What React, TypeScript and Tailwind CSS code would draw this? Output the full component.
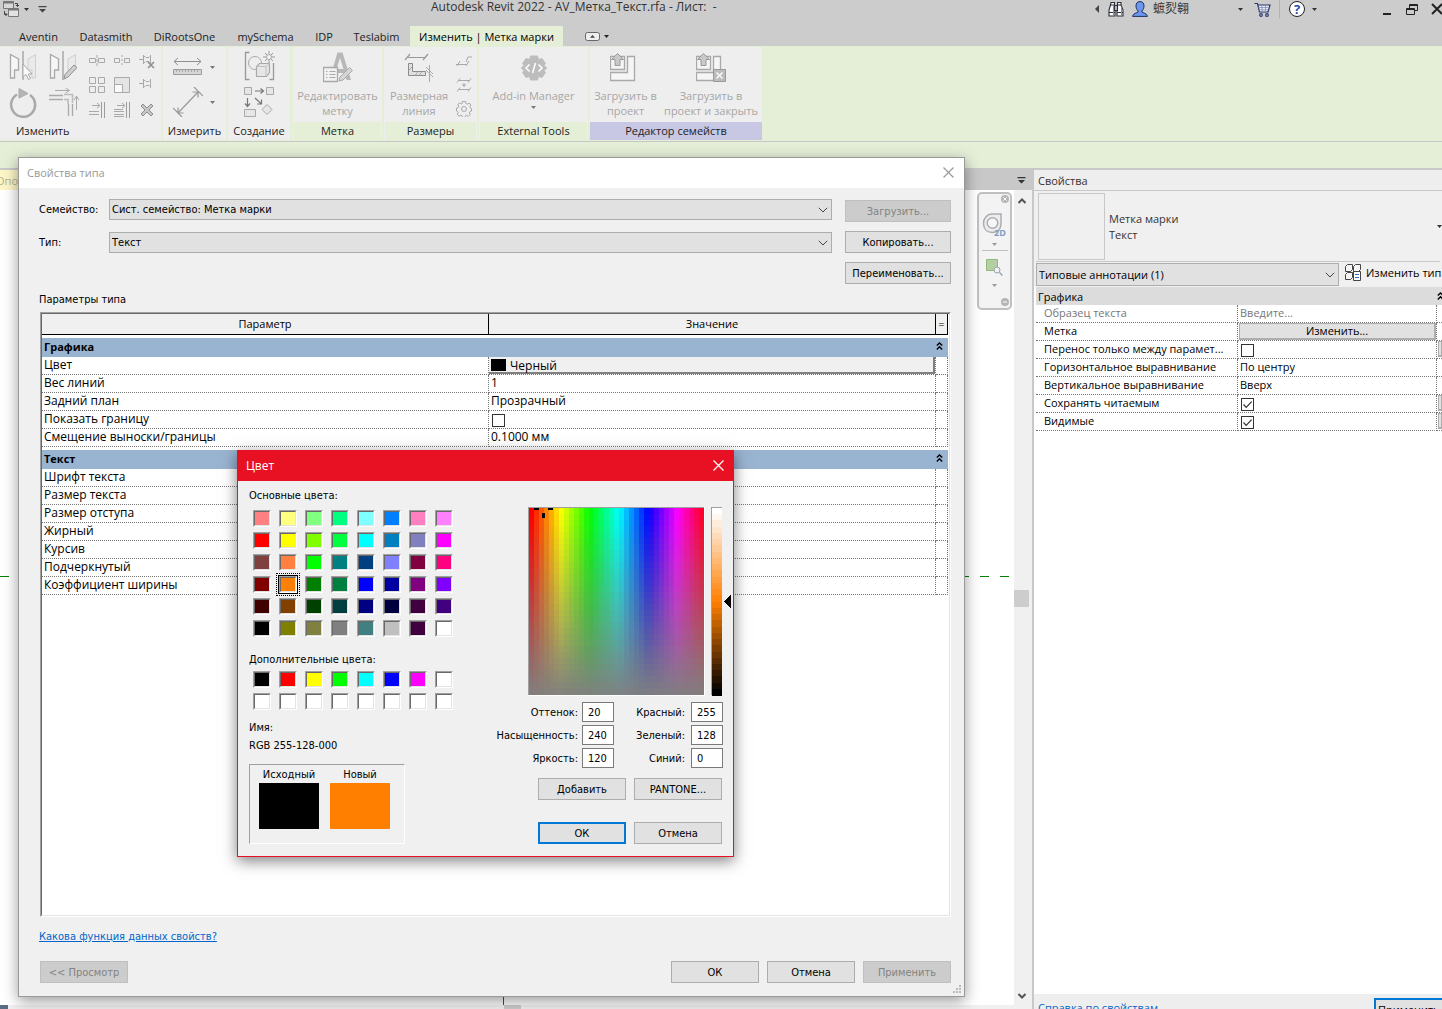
import React from 'react';
import clsx from 'clsx';

const dialogFont = "font-['DejaVu_Sans_Condensed','DejaVu_Sans',sans-serif] text-[11px]";

/* ---------- shared controls ---------- */

interface PushButtonProps {
  children: React.ReactNode;
  className?: string;
  disabled?: boolean;
  primary?: boolean;
}

const PushButton: React.FC<PushButtonProps> = ({ children, className, disabled, primary }) => (
  <button
    disabled={disabled}
    className={clsx(
      'h-[22px] shrink-0 whitespace-nowrap pt-0.5 text-center leading-4',
      primary ? 'border-2 border-[#0078d7]' : 'border',
      disabled ? 'border-[#bfbfbf] bg-[#cccccc] text-[#838383]' : 'bg-[#e1e1e1] text-black',
      !disabled && !primary && 'border-[#adadad]',
      className
    )}
  >
    {children}
  </button>
);

const Caret = ({ className }: { className?: string }) => (
  <svg width="5" height="3" viewBox="0 0 5 3" className={clsx('shrink-0', className)} fill="currentColor">
    <path d="M0 0h5L2.5 3z" />
  </svg>
);

const SelectBox = ({ id, label, value, className }: { id: string; label?: string; value: string; className?: string }) => (
  <div className={clsx('relative', className)}>
    <select
      id={id}
      aria-label={label}
      className="block h-full w-full appearance-none border border-[#adadad] bg-[#e1e1e1] pl-0.5 pt-px text-black"
    >
      <option>{value}</option>
    </select>
    <svg width="10" height="6" viewBox="0 0 10 6" className="pointer-events-none absolute right-1 top-1/2 -mt-[3px]" fill="none" stroke="#444">
      <path d="M.8.8 5 5 9.2.8" />
    </svg>
  </div>
);

const CheckBox = ({ id, label, checked }: { id: string; label: string; checked?: boolean }) => (
  <span className="relative block size-[13px]">
    <input
      id={id}
      aria-label={label}
      type="checkbox"
      defaultChecked={checked}
      className="peer block size-[13px] appearance-none border border-[#333] bg-white"
    />
    <svg viewBox="0 0 13 13" className="pointer-events-none absolute inset-0 hidden peer-checked:block" fill="none" stroke="#333" strokeWidth="1.2">
      <path d="M2.5 6.5 5.2 9.3 10.6 3.6" />
    </svg>
  </span>
);

const CollapseMark = () => (
  <svg width="7" height="8" viewBox="0 0 7 8" fill="none" stroke="#000" strokeWidth="1.4">
    <path d="M.8 3.6 3.5 1 6.2 3.6M.8 7.4 3.5 4.8 6.2 7.4" />
  </svg>
);

const CloseMark = ({ className }: { className?: string }) => (
  <svg width="11" height="11" viewBox="0 0 11 11" className={className} fill="none" stroke="currentColor" strokeWidth="1.2">
    <path d="M.5.5l10 10M10.5.5l-10 10" />
  </svg>
);

/* ---------- title bar ---------- */

const TitleBar = () => (
  <header className="flex h-[26px] shrink-0 items-start overflow-hidden text-[#333]">
    <div className="flex w-[431px] shrink-0 items-center pl-[3px] pt-px">
      <button aria-label="Переключить окна">
        <svg width="17" height="17" viewBox="0 0 17 17" fill="none" stroke="#777">
          <path d="M.5.5h10v7H.5z" fill="#d8d8d8" />
          <path d="M.5 1.5h10" strokeWidth="2" />
          <path d="M5.5 7.5h10v8h-10z" fill="#e2e2e2" />
          <path d="M5.5 8.5h10" strokeWidth="2" />
          <path d="M12 2.5h2.5V5M13 4l1.5 1.500L16 4M1.500 10v3.500H4M2.500 12l1.500 1.500L2.500 15" stroke="#444" />
        </svg>
      </button>
      <Caret className="ml-1" />
      <button aria-label="Настроить панель" className="ml-[9px]">
        <svg width="9" height="8" viewBox="0 0 9 8" fill="#444">
          <path d="M.5 0h8v1.300h-8zM1 3h7l-3.500 3.500z" />
        </svg>
      </button>
    </div>
    <h1 className="whitespace-pre leading-[14px]">Autodesk Revit 2022 - AV_Метка_Текст.rfa - Лист:  -</h1>
    <div className="ml-auto flex h-[18px] shrink-0 items-center">
      <svg width="4" height="8" viewBox="0 0 4 8" fill="#444">
        <path d="M4 0v8L0 4z" />
      </svg>
      <button aria-label="Поиск" className="ml-[9px]">
        <svg width="16" height="16" viewBox="0 0 16 16" fill="#fafafa" stroke="#2b2f3a" strokeWidth="1.100">
          <path d="M3 1.500h3.500V4L7 5v10H1V9l1.500-5zM9.500 1.500H13V4l2 5v6H9V5l.5-1z" />
          <path d="M6.500 4.500h3v5h-3z" fill="#b9bcc4" />
          <path d="M1 11.500h6M9 11.500h6M3 4h3.500M9.500 4H13" />
          <path d="M5.500 5v9M13.500 7v7" stroke="#8b8f99" />
        </svg>
      </button>
      <button className="ml-2 flex items-center">
        <svg width="16" height="16" viewBox="0 0 16 16" stroke="#1b2d63" fill="#6d97ee">
          <path d="M8 .6c2.600 0 4 1.600 4 4.200 0 2.200-.8 3.900-2 5v1.200c1 1 5 1.300 5.400 4.400H.6C1 12.300 5 12 6 11V9.800c-1.200-1.100-2-2.800-2-5C4 2.200 5.400.6 8 .6z" />
        </svg>
        <span className="ml-[5px] leading-[18px]">蟅烮翱</span>
        <Caret className="ml-[49px]" />
      </button>
      <button aria-label="Магазин" className="ml-[11px]">
        <svg width="17" height="15" viewBox="0 0 17 15" fill="#e9ecf5" stroke="#27346b" strokeWidth="1.200">
          <path d="M.5 1.500h3l2 8.500h8.500l2-7H4" />
          <path d="M4.500 5.500h11M5 7.800h9.500M7.500 3.500 8.500 10M11.500 3.500v6.500" stroke="#8791b8" strokeWidth=".8" />
          <circle cx="7" cy="13" r="1.300" />
          <circle cx="13" cy="13" r="1.300" />
        </svg>
      </button>
      <span className="ml-2 h-[18px] w-px bg-[#b3b3b3]" />
      <button className="ml-[9px] flex items-center" aria-label="Справка">
        <span className="flex size-4 items-center justify-center rounded-full border border-[#222] bg-white text-[13px] font-bold leading-[14px] text-[#2450b8]">?</span>
        <Caret className="ml-[7px]" />
      </button>
      <button aria-label="Свернуть" className="ml-[66px]">
        <svg width="8" height="12" viewBox="0 0 8 12" fill="#222">
          <path d="M0 10h8v2H0z" />
        </svg>
      </button>
      <button aria-label="Восстановить" className="ml-[15px]">
        <svg width="12" height="11" viewBox="0 0 12 11" fill="none" stroke="#222">
          <path d="M.5 4.500h8v6h-8zM.5 5.500h8M3.500 4V.5h8v6H9M3.500 1.500h8" />
        </svg>
      </button>
      <button aria-label="Закрыть" className="ml-[13px] w-[11px] overflow-hidden">
        <svg width="12" height="12" viewBox="0 0 12 12" fill="none" stroke="#222" strokeWidth="2">
          <path d="M1 1l10 10M11 1 1 11" />
        </svg>
      </button>
    </div>
  </header>
);

const TabBar = () => {
  const tab = 'h-5 shrink-0 text-center leading-[19px]';
  return (
    <nav className="flex h-5 shrink-0 pl-2 text-[11px] text-[#222]">
      <button className={clsx(tab, 'w-[61px]')}>Aventin</button>
      <button className={clsx(tab, 'w-[74px]')}>Datasmith</button>
      <button className={clsx(tab, 'w-[83px]')}>DiRootsOne</button>
      <button className={clsx(tab, 'w-[79px]')}>mySchema</button>
      <button className={clsx(tab, 'w-[38px]')}>IDP</button>
      <button className={clsx(tab, 'w-[67px]')}>Teslabim</button>
      <button className={clsx(tab, 'w-[153px] whitespace-nowrap bg-[#e5efd8] text-black')}>Изменить | Метка марки</button>
      <button aria-label="Свернуть ленту" className="ml-[22px] flex items-center gap-1">
        <svg width="15" height="9" viewBox="0 0 15 9" fill="#eee" stroke="#666">
          <rect x=".5" y=".5" width="14" height="8" rx="2" />
          <path d="M5 5.800h5L7.500 3z" fill="#444" stroke="none" />
        </svg>
        <Caret />
      </button>
    </nav>
  );
};

/* ---------- ribbon icons ---------- */

const Glyph = ({ w, h, children }: { w: number; h: number; children: React.ReactNode }) => (
  <svg width={w} height={h} viewBox={`0 0 ${w} ${h}`} fill="none" stroke="#a9a9a9" className="shrink-0">
    {children}
  </svg>
);

const MirrorPick = () => (
  <Glyph w={28} h={30}>
    <path d="M1.500 3.500 9.500 8v11h-4v8h-4z" fill="#f6f6f6" strokeWidth="1.300" />
    <path d="M26.500 3.500 19 8v11h4v8h3.500z" fill="#eaeaea" stroke="#cfcfcf" />
    <path d="M14 0v29" strokeWidth="1.500" />
    <path d="M14 13v13l3-2.500 2.500 5 2-1-2.300-4.500H23z" fill="#fafafa" />
  </Glyph>
);

const MirrorDraw = () => (
  <Glyph w={28} h={30}>
    <path d="M1.500 3.500 9.500 8v11h-4v8h-4z" fill="#f6f6f6" strokeWidth="1.300" />
    <path d="M26.500 3.500 19 8v11h7.500z" fill="#eaeaea" stroke="#cfcfcf" />
    <path d="M14 0v29" strokeWidth="1.500" />
    <path d="M15 28l1-4.500 9-9.500 3 2.500-9 9.500z" fill="#d0d0d0" stroke="#8f8f8f" />
  </Glyph>
);

const Rotate = () => (
  <Glyph w={28} h={30}>
    <path d="M8 6.500a12 12 0 1 0 13 .5" strokeWidth="2.500" />
    <path d="M10 .5v9.500L19 5.500z" fill="#b4b4b4" />
  </Glyph>
);

const Corner = () => (
  <Glyph w={30} h={30}>
    <path d="M6 2.500h14M16.500 0l4 2.500-4 2.500M27.500 22v-13M25 12l2.500-4 2.500 4" />
    <path d="M0 7.500h14M0 11.500h14" strokeWidth="1.300" />
    <path d="M15 6.500h8.500V15M15 11.500h4V16" stroke="#bbb" strokeWidth="1.500" />
    <path d="M19.500 16v12M23.500 16v12" strokeWidth="1.300" />
  </Glyph>
);

const SplitIcon = ({ gap }: { gap?: boolean }) => (
  <Glyph w={16} h={16}>
    <path d={gap ? 'M.5 5.500h5v4h-5zM10.500 5.500h5v4h-5z' : 'M.5 5.500h6v4h-6zM9.500 5.500h6v4h-6z'} />
    <path d="M8 2v12" strokeDasharray={gap ? '2 2' : '3 1'} />
  </Glyph>
);

const PinIcon = ({ cross }: { cross?: boolean }) => (
  <Glyph w={16} h={16}>
    <path d="M0 6.500h4M4.500 2v9M4.500 3.500h1.500l1 1h3l1-1h.5M4.500 9.500h1.500l1-1h3l1 1h.5M11.500 2v9" />
    {cross && <path d="M9 9l6 6M15 9l-6 6" stroke="#8f8f8f" strokeWidth="1.600" />}
  </Glyph>
);

const ArrayIcon = () => (
  <Glyph w={16} h={16}>
    <path d="M.5.5h6v6h-6zM9.500.5h6v6h-6zM.5 9.500h6v6h-6zM9.500 9.500h6v6h-6z" />
  </Glyph>
);

const ScaleIcon = () => (
  <Glyph w={16} h={16}>
    <path d="M.5.500h15v15H.5z" fill="#e4e4e4" />
    <path d="M.5 7.500h8v8h-8z" fill="#fafafa" />
  </Glyph>
);

const TrimIcon = ({ multi }: { multi?: boolean }) => (
  <Glyph w={16} h={16}>
    <path d="M3 3.500h7M8 1l3 2.500L8 6M0 9.500h10M0 12.500h10" />
    {multi && <path d="M0 7.500h9M0 14.500h10" />}
    <path d="M12.500 0v16M15.500 0v16" stroke="#9c9c9c" />
  </Glyph>
);

const DeleteIcon = () => (
  <Glyph w={16} h={16}>
    <path d="M2 4l2-2 4 4 4-4 2 2-4 4 4 4-2 2-4-4-4 4-2-2 4-4z" fill="#c4c4c4" stroke="#909090" />
  </Glyph>
);

const Ruler = () => (
  <Glyph w={30} h={20}>
    <path d="M1 4.500h27M5 1 1 4.500 5 8M24 1l4 3.500L24 8" stroke="#8f8f8f" />
    <path d="M.5 12.500h28v5H.5z" fill="#d5d5d5" stroke="#9c9c9c" />
    <path d="M3.500 13v2M6.500 13v2M9.500 13v2M12.500 13v2M15.500 13v2M18.500 13v2M21.500 13v2M24.500 13v2" />
  </Glyph>
);

const Aligned = () => (
  <Glyph w={30} h={30}>
    <path d="M0 21l9 9M21 0l9 9M5 26 25 5M5 20.500V26h5.500M19.500 5H25v5.500" stroke="#999" strokeWidth="1.200" />
  </Glyph>
);

const CreateSimilar = () => (
  <Glyph w={31} h={30}>
    <path d="M5.500 1.500H1.500v27h4M25.500 28.500h4V12" stroke="#999" strokeWidth="1.300" />
    <circle cx="11" cy="12" r="6.500" fill="#eee" />
    <path d="M12.500 15.500l3-3h10v9l-3 4h-10z" fill="#e6e6e6" strokeWidth="1.200" />
    <path d="M12.500 15.500h9.500v9.500M22 15.500l3.500-3" stroke="#c0c0c0" />
    <circle cx="25" cy="6" r="2.500" fill="#f4f4f4" />
    <path d="M25 0v3M25 9v3M19 6h3M28 6h3M21 2l2 2M27 8l2 2M29 2l-2 2M23 8l-2 2" stroke="#999" />
  </Glyph>
);

const CreateGroup = () => (
  <Glyph w={31} h={30}>
    <path d="M.5.5h7v7h-7zM22.500.500h7v7h-7zM.5 22.500h11v7H.500zM18 22.500l5-5 5 5-5 5z" fill="#e6e6e6" />
    <path d="M11 4h8M16.500 1.500l3 2.500-3 2.500M3.500 11v8M1 16.500l2.500 3 2.500-3M11 11l6 5.500M17.500 12.500V17h-4.500" stroke="#777" strokeWidth="1.200" />
  </Glyph>
);

const EditLabel = () => (
  <Glyph w={30} h={32}>
    <path d="M14.500.5h5L28 28h-4.500l-2-7h-9l-2 4-3-1zM17 6l-3.500 11h7z" fill="#b8b8b8" stroke="none" />
    <path d="M.500 15.500h14v14H.500z" fill="#f2f2f2" strokeWidth="1.300" />
    <path d="M3 19.500h1.500M3 22.500h1.500M3 25.500h1.500M6.500 19.500h6M6.500 22.500h6M6.500 25.500h6" />
    <path d="M16 29l1-4 9.500-9.500 3 3L20 28z" fill="#d5d5d5" />
  </Glyph>
);

const DimLine = () => (
  <Glyph w={30} h={30}>
    <path d="M4 4.500h18M1 7l5-6M19 7l5-6" stroke="#999" strokeWidth="1.200" />
    <path d="M4.500 10.500v12h17v-4H8.500v-8z" fill="#e0e0e0" stroke="#8b8b8b" />
    <path d="M11 22.500l3-4M15 22.500l3-4M5 17l3-3M25.500 12v17M22 17l7 7M22 14l7 7" />
  </Glyph>
);

const SpotIcon = () => (
  <Glyph w={16} h={14}>
    <path d="M0 9.500h11M4 6 1 11M13 6l-3 5M10 7l2-5h4" />
  </Glyph>
);

const PointsIcon = () => (
  <Glyph w={16} h={14}>
    <path d="M2 2.500h12M1 4.500l3-4M12 4.500l3-4M2 11.500h12M1 13.500l3-4M12 13.500l3-4M8 5v4M6 7h4" />
  </Glyph>
);

const GearIcon = () => (
  <Glyph w={16} h={16}>
    <circle cx="8" cy="8" r="2.500" />
    <path d="M6.500.5h3l.4 2 1.500.7 1.800-1.100 1.700 1.900-1 1.600.6 1.400 1 .5v2.500l-1.500.5-.6 1.300.9 1.700-1.900 1.800-1.700-1-1.200.5-.5 1.700H6.500l-.5-1.800-1.300-.5-1.700 1-1.800-1.800 1-1.700-.6-1.200-1.100-.5V7l1.600-.5.600-1.400L1.800 3.500 3.500 1.900l1.700 1 1-.4z" />
  </Glyph>
);

const AddInIcon = () => (
  <Glyph w={26} h={26}>
    <path
      d="M9.500 1h7l1 3.500L21 3.500l3.500 5L22.500 11q3 .5 3 2t-3 2l2 2.500-3.500 5-3.500-1-1 3.500h-7l-1-3.500-3.500 1-3.500-5 2-2.500q-3-.5-3-2t3-2l-2-2.500 3.500-5 3.500 1z"
      fill="#bdbdbd"
      stroke="#bdbdbd"
      strokeLinejoin="round"
    />
    <path d="M8.500 9.500 5 13l3.500 3.500M17.500 9.500 21 13l-3.500 3.500M14.500 8l-3 10" stroke="#fff" strokeWidth="1.500" />
  </Glyph>
);

const LoadIcon = ({ close }: { close?: boolean }) => (
  <Glyph w={31} h={30}>
    <path d="M.500 3.500h14v13H.500zM17.500 3.500h7v24H.500v-8h17z" fill="#f5f5f5" strokeWidth="1.300" />
    <path d="M7.500 .5l6 6H10v6H5v-6H1.500z" fill="#c9c9c9" stroke="#999" />
    {close && (
      <>
        <path d="M17.500 16.500h12v12h-12z" fill="#bcbcbc" stroke="#999" />
        <path d="M20.500 19.500l6 6M26.500 19.500l-6 6" stroke="#fff" strokeWidth="1.300" />
      </>
    )}
  </Glyph>
);

/* ---------- ribbon ---------- */

interface RibbonPanelProps {
  title: string;
  className?: string;
  titleClass?: string;
  children: React.ReactNode;
}

const RibbonPanel: React.FC<RibbonPanelProps> = ({ title, className, titleClass, children }) => (
  <section className={clsx('flex h-[93px] shrink-0 flex-col bg-[#eeeeee]', className)}>
    <div className="h-[75px] text-[#a6a6a6]">{children}</div>
    <h2 className={clsx('h-[18px] leading-[18px] text-[#222]', titleClass ?? 'text-center')}>{title}</h2>
  </section>
);

const BigButton = ({ icon, children, className }: { icon: React.ReactNode; children: React.ReactNode; className?: string }) => (
  <button disabled className={clsx('flex shrink-0 flex-col items-center whitespace-nowrap pt-0.5 leading-[15px]', className)}>
    <span className="mb-px flex h-[38px] items-center">{icon}</span>
    {children}
  </button>
);

const Ribbon = () => (
  <div className="flex h-[95px] shrink-0 overflow-hidden bg-[#e5efd8] pt-px text-[11px]">
    <RibbonPanel title="Изменить" className="w-[161px]" titleClass="pl-4">
      <div className="flex pl-[9px] pt-1">
        <div className="grid grid-cols-[40px_38px] gap-y-[7px]">
          <MirrorPick />
          <MirrorDraw />
          <Rotate />
          <Corner />
        </div>
        <div className="grid grid-cols-[25px_25px_16px] gap-y-2 pl-0.5 pt-0.5">
          <SplitIcon />
          <SplitIcon gap />
          <PinIcon cross />
          <ArrayIcon />
          <ScaleIcon />
          <PinIcon />
          <TrimIcon />
          <TrimIcon multi />
          <DeleteIcon />
        </div>
      </div>
    </RibbonPanel>
    <RibbonPanel title="Измерить" className="ml-0.5 w-[63px]">
      <div className="flex flex-col gap-2.5 pl-2.5 pt-[10px]">
        <button aria-label="Измерить" className="flex items-center gap-[7px] text-[#777]">
          <Ruler />
          <Caret />
        </button>
        <button aria-label="Размер" className="flex items-center gap-[7px] text-[#777]">
          <Aligned />
          <Caret />
        </button>
      </div>
    </RibbonPanel>
    <RibbonPanel title="Создание" className="ml-0.5 w-[62px]">
      <div className="flex flex-col items-center gap-[6px] pt-1">
        <CreateSimilar />
        <CreateGroup />
      </div>
    </RibbonPanel>
    <RibbonPanel title="Метка" className="ml-[3px] w-[89px]" titleClass="mx-px bg-[#e5efd8] text-center">
      <BigButton icon={<EditLabel />} className="w-full">
        <span>Редактировать</span>
        <span>метку</span>
      </BigButton>
    </RibbonPanel>
    <RibbonPanel title="Размеры" className="ml-0.5 w-[93px]" titleClass="mx-px bg-[#e5efd8] text-center">
      <div className="flex pl-1">
        <BigButton icon={<DimLine />} className="w-[62px]">
          <span>Размерная</span>
          <span>линия</span>
        </BigButton>
        <div className="flex flex-col gap-[9px] pl-[6px] pt-2">
          <SpotIcon />
          <PointsIcon />
          <GearIcon />
        </div>
      </div>
    </RibbonPanel>
    <RibbonPanel title="External Tools" className="ml-0.5 w-[109px]" titleClass="mx-px bg-[#e5efd8] text-center">
      <BigButton icon={<AddInIcon />} className="w-full">
        <span>Add-in Manager</span>
        <Caret className="mt-[3px] text-[#777]" />
      </BigButton>
    </RibbonPanel>
    <RibbonPanel title="Редактор семейств" className="ml-0.5 w-[172px]" titleClass="bg-[#c8c8e4] text-center">
      <div className="flex">
        <BigButton icon={<LoadIcon />} className="w-[71px]">
          <span>Загрузить в</span>
          <span>проект</span>
        </BigButton>
        <BigButton icon={<LoadIcon close />} className="w-[100px]">
          <span>Загрузить в</span>
          <span>проект и закрыть</span>
        </BigButton>
      </div>
    </RibbonPanel>
  </div>
);

/* ---------- drawing view ---------- */

const NavBar = () => (
  <div className="flex h-[118px] w-[35px] flex-col items-center rounded-[5px] border-2 border-[#c0c0c0] bg-[#f3f3f3] text-[#999]">
    <svg width="8" height="8" viewBox="0 0 8 8" className="mr-px mt-px self-end" fill="#b5b5b5">
      <circle cx="4" cy="4" r="4" />
      <path d="M2.300 2.300l3.400 3.400M5.700 2.300 2.300 5.700" stroke="#fff" />
    </svg>
    <button aria-label="Штурвал" className="mt-2.5">
      <svg width="25" height="26" viewBox="0 0 25 26" fill="none" stroke="#a9adb3" strokeWidth="1.500">
        <path d="M10.500 1H19v9c0 6-3 9.500-8.500 9.500S1.500 16 1.500 10.500 5 1 10.500 1z" fill="#ececec" />
        <circle cx="10.500" cy="10" r="5.300" fill="#f6f6f6" />
        <text x="12" y="23" fill="#7d9cc0" stroke="none" fontSize="9" fontWeight="bold">2D</text>
      </svg>
    </button>
    <Caret className="mt-1" />
    <span className="mt-1 h-px w-[26px] bg-[#c0c0c0]" />
    <button aria-label="Зумирование" className="mt-2">
      <svg width="17" height="17" viewBox="0 0 17 17" fill="none">
        <path d="M.5.5h11v11H.500z" fill="#b4d0a2" stroke="#93b77c" />
        <circle cx="11" cy="11" r="3" fill="#eef2f5" stroke="#9aa4ad" />
        <path d="M13.500 13.500l3 3" stroke="#9aa4ad" strokeWidth="1.500" />
      </svg>
    </button>
    <Caret className="mt-2" />
    <svg width="8" height="8" viewBox="0 0 8 8" className="mb-0.5 mr-px mt-auto self-end" fill="#b5b5b5">
      <circle cx="4" cy="4" r="4" />
      <path d="M2 4h4" stroke="#fff" />
    </svg>
  </div>
);

const DrawingView = () => (
  <main className="flex min-w-0 flex-1 flex-col bg-[#f0f0f0]">
    <div className="flex h-5 shrink-0 items-center bg-[#c8c8c8]">
      <button className="-ml-1 h-full w-24 bg-[#fdf7c8] text-left text-[11px] leading-[22px] text-[#b5b096]">Опо</button>
      <button aria-label="Список видов" className="ml-auto mr-1.5">
        <svg width="9" height="7" viewBox="0 0 9 7" fill="#333">
          <path d="M.500 0h8v1.300h-8zM1 3h7L4.500 6.500z" />
        </svg>
      </button>
    </div>
    <div className="flex min-h-0 flex-1">
      <div className="relative min-w-0 flex-1 bg-white">
        <div className="absolute inset-x-0 top-[386px] h-px bg-[repeating-linear-gradient(90deg,#008000_0_9px,transparent_9px_20px)]" />
        <div className="absolute bottom-0 left-[503px] h-[10px] w-px bg-[#008000]" />
        <div className="absolute right-0.5 top-0.5">
          <NavBar />
        </div>
      </div>
      <div className="mr-[3px] flex w-[15px] shrink-0 flex-col items-center justify-between pb-1.5 pt-2">
        <svg width="8" height="6" viewBox="0 0 8 6" fill="none" stroke="#555" strokeWidth="2">
          <path d="M.5 5 4 1.500 7.500 5" />
        </svg>
        <span className="h-[17px] w-[15px] bg-[#cdcdcd]" />
        <svg width="8" height="6" viewBox="0 0 8 6" fill="none" stroke="#555" strokeWidth="2">
          <path d="M.5 1 4 4.500 7.500 1" />
        </svg>
      </div>
    </div>
    <div className="flex h-1 shrink-0">
      <span className="h-1 w-[8px] bg-[#5b6b82]" />
      <span className="ml-[496px] h-1 w-[17px] bg-[#cdcdcd]" />
    </div>
  </main>
);

/* ---------- properties palette ---------- */

interface PropertyRow {
  name: string;
  value?: string;
  kind?: 'muted' | 'button' | 'check';
  checked?: boolean;
  extra?: boolean;
}

const paletteRows: PropertyRow[] = [
  { name: 'Образец текста', value: 'Введите...', kind: 'muted' },
  { name: 'Метка', value: 'Изменить...', kind: 'button' },
  { name: 'Перенос только между парамет...', kind: 'check', extra: true },
  { name: 'Горизонтальное выравнивание', value: 'По центру' },
  { name: 'Вертикальное выравнивание', value: 'Вверх' },
  { name: 'Сохранять читаемым', kind: 'check', checked: true, extra: true },
  { name: 'Видимые', kind: 'check', checked: true, extra: true },
];

const PropertiesPalette = () => (
  <aside className="flex w-[410px] shrink-0 flex-col overflow-hidden border-l-2 border-[#c8c8c8] bg-[#f0f0f0] text-[11px] text-[#333]">
    <h2 className="h-[21px] shrink-0 border-b border-[#c8c8c8] bg-[#eeeeee] pl-1 leading-[21px]">Свойства</h2>
    <div className="mx-0.5 flex h-[71px] shrink-0 items-center border-b border-[#c8c8c8]">
      <div className="ml-0.5 size-[67px] border border-[#c8c8c8]" />
      <div className="ml-1 pt-0.5 leading-4">
        <p>Метка марки</p>
        <p>Текст</p>
      </div>
      <Caret className="-mr-0.5 ml-auto" />
    </div>
    <div className="flex h-[25px] shrink-0 items-center whitespace-nowrap pl-0.5 text-black">
      <SelectBox id="palette-type" label="Категория" value="Типовые аннотации (1)" className="h-[23px] w-[303px] shrink-0" />
      <button className="ml-1.5 flex items-center gap-[5px] pb-1">
        <svg width="16" height="17" viewBox="0 0 16 17" fill="#f5f5f5" stroke="#444">
          <path d="M.5 2.500 2.500.5h5v5l-2 2h-5zM8.500 2.500 10.500.5h5v5l-2 2h-5zM.500 10.500l2-2h5v5l-2 2h-5z" />
          <path d="M8.500 7.500h7v9h-7z" fill="#fff" />
          <path d="M10 10.500h4M10 13.500h4" stroke="#2f6cc0" />
        </svg>
        Изменить тип
      </button>
    </div>
    <div className="min-h-0 flex-1 overflow-hidden bg-white pl-0.5 text-black">
      <table className="w-full table-fixed border-separate border-spacing-0">
        <colgroup>
          <col className="w-[202px]" />
          <col className="w-[199px]" />
          <col />
        </colgroup>
        <thead>
          <tr className="h-[18px] bg-[#dcdcdc] text-left leading-[17px]">
            <th colSpan={2} className="p-0 pl-0.5 font-normal">Графика</th>
            <th className="p-0"><CollapseMark /></th>
          </tr>
        </thead>
        <tbody>
          {paletteRows.map((row, i) => (
            <tr key={row.name} className={clsx('h-[18px] whitespace-nowrap align-top leading-[16px]', row.kind === 'muted' && 'text-[#777]')}>
              <td className="border-b border-r border-dotted border-[#777] p-0 pl-2">{row.name}</td>
              <td className={clsx('border-b border-r border-dotted border-[#777] p-0', row.kind === 'button' ? 'pl-px' : 'pl-0.5')}>
                {row.kind === 'check' && (
                  <span className="block pl-px pt-[3px]">
                    <CheckBox id={`palette-${i}`} label={row.name} checked={row.checked} />
                  </span>
                )}
                {row.kind === 'button' && (
                  <button className="block h-[17px] w-full border border-b-2 border-r-2 border-[#adadad] bg-[#e1e1e1] leading-[14px]">{row.value}</button>
                )}
                {row.kind !== 'check' && row.kind !== 'button' && row.value}
              </td>
              <td className="border-b border-dotted border-[#777] p-0 pl-px">
                {row.extra && <button aria-label="Связать параметр" className="block h-4 w-full border border-b-2 border-[#adadad] bg-[#e1e1e1]" />}
              </td>
            </tr>
          ))}
        </tbody>
      </table>
    </div>
    <footer className="flex h-[15px] shrink-0 items-start justify-between overflow-hidden whitespace-nowrap bg-[#eeeeee] pl-1 pt-1">
      <a href="#help" className="leading-5 text-[#0066cc] underline">Справка по свойствам</a>
      <button className="h-6 w-[68px] shrink-0 overflow-hidden border-2 border-r-0 border-[#0078d7] bg-[#e1e1e1] pl-0.5 text-left leading-5 text-black">Применить</button>
    </footer>
  </aside>
);

/* ---------- type properties dialog ---------- */

const graphicRows: { name: string; value?: string; kind?: 'color' | 'check' }[] = [
  { name: 'Цвет', value: 'Черный', kind: 'color' },
  { name: 'Вес линий', value: '1' },
  { name: 'Задний план', value: 'Прозрачный' },
  { name: 'Показать границу', kind: 'check' },
  { name: 'Смещение выноски/границы', value: '0.1000 мм' },
];

const textRows = [
  'Шрифт текста',
  'Размер текста',
  'Размер отступа',
  'Жирный',
  'Курсив',
  'Подчеркнутый',
  'Коэффициент ширины',
];

const GroupRow = ({ title }: { title: string }) => (
  <>
    <tr className="h-[3px]">
      <td colSpan={3} className="p-0" />
    </tr>
    <tr className="h-[19px] bg-[#99b4d1] text-left align-top leading-[18px]">
      <th colSpan={2} className="p-0 pl-0.5 text-[11px] font-bold">{title}</th>
      <th className="p-0 pt-1">
        <CollapseMark />
      </th>
    </tr>
  </>
);

const ParameterRow = ({ name, children }: { name: string; children?: React.ReactNode }) => (
  <tr className="h-[18px] whitespace-nowrap align-top leading-[15px]">
    <td className="border-b border-r border-dotted border-[#777] p-0 pl-0.5">{name}</td>
    <td className="border-b border-r border-dotted border-[#777] p-0">{children}</td>
    <td className="border-b border-r border-dotted border-[#777] p-0" />
  </tr>
);

const ParameterTable = () => (
  <div className="h-[605px] border border-b-white border-l-[#a0a0a0] border-r-white border-t-[#a0a0a0]">
    <div className="h-full border border-b-[#e3e3e3] border-l-[#696969] border-r-[#e3e3e3] border-t-[#696969] bg-white pr-px font-['Open_Sans',sans-serif] text-[12px]">
      <table className="w-full table-fixed border-separate border-spacing-0">
        <colgroup>
          <col />
          <col />
          <col className="w-3" />
        </colgroup>
        <thead>
          <tr className="h-[21px] bg-[#f0f0f0] text-[11px] leading-[20px]">
            <th className="border-b border-r border-black p-0 font-normal">Параметр</th>
            <th className="border-b border-r border-black p-0 font-normal">Значение</th>
            <th className="border-b border-r border-black p-0 font-normal">=</th>
          </tr>
        </thead>
        <tbody>
          <GroupRow title="Графика" />
          {graphicRows.map((row) => (
            <ParameterRow key={row.name} name={row.name}>
              {row.kind === 'color' && (
                <button className="flex h-[17px] w-full items-center border-b-2 border-r-2 border-[#808080] bg-[#f0f0f0] pl-0.5">
                  <span className="h-3 w-[15px] bg-black" />
                  <span className="ml-1 pt-0.5">{row.value}</span>
                </button>
              )}
              {row.kind === 'check' && (
                <span className="block pl-[3px] pt-[3px]">
                  <CheckBox id="show-border" label={row.name} />
                </span>
              )}
              {!row.kind && <span className="pl-0.5">{row.value}</span>}
            </ParameterRow>
          ))}
          <GroupRow title="Текст" />
          {textRows.map((name) => (
            <ParameterRow key={name} name={name} />
          ))}
        </tbody>
      </table>
    </div>
  </div>
);

const TypeDialog = () => (
  <section
    role="dialog"
    aria-label="Свойства типа"
    className={clsx('absolute left-[18px] top-[157px] w-[947px] border border-[#999] bg-[#f0f0f0] text-black shadow-[0_4px_14px_rgba(0,0,0,0.4)]', dialogFont)}
  >
    <div className="flex h-[30px] items-center justify-between bg-white pb-px pl-2 pr-2.5 text-[#999]">
      <h2 className="pt-px font-['Open_Sans',sans-serif]">Свойства типа</h2>
      <button aria-label="Закрыть"><CloseMark /></button>
    </div>
    <div className="pb-[13px] pl-[21px] pr-[13px] pt-[11px]">
      <div className="flex h-[85px]">
        <div className="grid flex-1 auto-rows-[21px] grid-cols-[69px_1fr] items-center gap-y-3">
          <label htmlFor="family" className="-ml-px pt-px">Семейство:</label>
          <SelectBox id="family" value="Сист. семейство: Метка марки" className="h-[21px]" />
          <label htmlFor="type" className="-ml-px">Тип:</label>
          <SelectBox id="type" value="Текст" className="h-[21px]" />
        </div>
        <div className="ml-[13px] flex w-[106px] flex-col gap-[9px] pt-px">
          <PushButton disabled>Загрузить...</PushButton>
          <PushButton>Копировать...</PushButton>
          <PushButton>Переименовать...</PushButton>
        </div>
      </div>
      <p className="-ml-px h-[28px] pt-2 leading-4">Параметры типа</p>
      <ParameterTable />
      <a href="#about" className="-ml-px mt-3 inline-block leading-4 text-[#0066cc] underline">Какова функция данных свойств?</a>
      <div className="mt-4 flex gap-2">
        <PushButton disabled className="mr-auto w-[88px]">&lt;&lt; Просмотр</PushButton>
        <PushButton className="w-[88px]">ОК</PushButton>
        <PushButton className="w-[88px]">Отмена</PushButton>
        <PushButton disabled className="w-[88px]">Применить</PushButton>
      </div>
    </div>
    <svg width="9" height="9" viewBox="0 0 9 9" className="absolute bottom-0.5 right-0.5" fill="#bbb">
      <path d="M6 0h2v2H6zM3 3h2v2H3zM6 3h2v2H6zM0 6h2v2H0zM3 6h2v2H3zM6 6h2v2H6z" />
    </svg>
  </section>
);

/* ---------- colour dialog ---------- */

const basicColors = [
  '#ff8080', '#ffff80', '#80ff80', '#00ff80', '#80ffff', '#0080ff', '#ff80c0', '#ff80ff',
  '#ff0000', '#ffff00', '#80ff00', '#00ff40', '#00ffff', '#0080c0', '#8080c0', '#ff00ff',
  '#804040', '#ff8040', '#00ff00', '#008080', '#004080', '#8080ff', '#800040', '#ff0080',
  '#800000', '#ff8000', '#008000', '#008040', '#0000ff', '#0000a0', '#800080', '#8000ff',
  '#400000', '#804000', '#004000', '#004040', '#000080', '#000040', '#400040', '#400080',
  '#000000', '#808000', '#808040', '#808080', '#408080', '#c0c0c0', '#400040', '#ffffff',
];

const customColors = [
  '#000000', '#ff0000', '#ffff00', '#00ff00', '#00ffff', '#0000ff', '#ff00ff', '#ffffff',
  '#ffffff', '#ffffff', '#ffffff', '#ffffff', '#ffffff', '#ffffff', '#ffffff', '#ffffff',
];

const Swatches = ({ colors, selected }: { colors: string[]; selected?: number }) => (
  <div className="ml-1 grid grid-cols-[repeat(8,18px)] gap-x-2 gap-y-[5px]">
    {colors.map((color, i) => (
      <button
        key={i}
        aria-label={color}
        className={clsx(
          'h-[17px] border border-b-white border-l-[#a0a0a0] border-r-white border-t-[#a0a0a0]',
          i === selected && 'shadow-[0_0_0_1px_#000] outline-1 outline-offset-2 outline-dotted outline-black'
        )}
      >
        <span
          className="block h-full border border-b-[#e3e3e3] border-l-[#696969] border-r-[#e3e3e3] border-t-[#696969]"
          style={{ backgroundColor: color }}
        />
      </button>
    ))}
  </div>
);

const HUES = 35;
const SATS = 31;

const Spectrum = () => (
  <svg width="177" height="189" viewBox="0 0 177 189" shapeRendering="crispEdges">
    <path d="M0 0h177v189H0z" fill="#fff" />
    <path d="M0 0h176v1H1v187H0z" fill="#a0a0a0" />
    {Array.from({ length: HUES * SATS }, (_, n) => {
      const col = n % HUES;
      const row = Math.floor(n / HUES);
      return (
        <rect
          key={n}
          x={1 + col * 5}
          y={1 + row * 6}
          width={5}
          height={row === SATS - 1 ? 7 : 6}
          fill={`hsl(${(col * 360) / HUES} ${100 - (row * 100) / SATS}% 50%)`}
        />
      );
    })}
    <path d="M6 1h5v2H6zM20 1h5v2h-5zM14 6h3v5h-3z" />
  </svg>
);

const LuminanceBar = () => (
  <svg width="21" height="189" viewBox="0 0 21 189" shapeRendering="crispEdges">
    <path d="M0 0h11v1H1v187H0z" fill="#a0a0a0" />
    {Array.from({ length: 30 }, (_, n) => (
      <rect key={n} x={1} y={1 + Math.round(n * 6.240)} width={10} height={6.500} fill={`hsl(30 100% ${100 - (n * 100) / 29}%)`} />
    ))}
    <path d="M13 94.500l7-7v14z" />
  </svg>
);

const ValueField = ({ id, label, value }: { id: string; label: string; value: string }) => (
  <>
    <label htmlFor={id} className="pt-px text-right">{label}</label>
    <input id={id} defaultValue={value} className="h-5 w-8 border border-[#7a7a7a] bg-white pl-[5px] pt-px" />
  </>
);

const ColorDialog = () => (
  <section
    role="dialog"
    aria-label="Цвет"
    className={clsx('absolute left-[237px] top-[450px] w-[497px] border border-[#e81123] bg-[#f0f0f0] text-black shadow-[0_4px_14px_rgba(0,0,0,0.5)]', dialogFont)}
  >
    <div className="flex h-[30px] items-center justify-between bg-[#e81123] pb-px pl-2 pr-[9px] text-white">
      <h2 className="pt-px font-['Open_Sans',sans-serif] text-[12px]">Цвет</h2>
      <button aria-label="Закрыть"><CloseMark /></button>
    </div>
    <div className="flex justify-between pb-3 pl-[11px] pr-[11px]">
      <div className="pt-[7px]">
        <p className="mb-1.5 leading-4">Основные цвета:</p>
        <Swatches colors={basicColors} selected={25} />
        <p className="mb-[3px] mt-[15px] leading-4">Дополнительные цвета:</p>
        <Swatches colors={customColors} />
        <p className="mt-2.5 leading-4">Имя:</p>
        <p className="mt-0.5 leading-4">RGB 255-128-000</p>
        <div className="mt-2.5 flex h-20 w-[156px] gap-[11px] border border-b-white border-l-[#a0a0a0] border-r-white border-t-[#a0a0a0] pl-[9px] pt-0.5 text-center leading-4">
          <div className="w-[60px]">
            <p>Исходный</p>
            <div className="h-[46px] bg-black" />
          </div>
          <div className="w-[60px]">
            <p>Новый</p>
            <div className="h-[46px] bg-[#ff8000]" />
          </div>
        </div>
      </div>
      <div className="flex flex-col pt-[26px]">
        <div className="-mr-2.5 flex justify-end gap-1.5">
          <Spectrum />
          <LuminanceBar />
        </div>
        <div className="-mr-px mt-1.5 flex justify-end">
          <div className="grid grid-cols-[auto_32px] items-center gap-x-1 gap-y-[3px]">
            <ValueField id="hue" label="Оттенок:" value="20" />
            <ValueField id="sat" label="Насыщенность:" value="240" />
            <ValueField id="lum" label="Яркость:" value="120" />
          </div>
          <div className="grid w-[109px] grid-cols-[1fr_32px] items-center gap-x-1.5 gap-y-[3px]">
            <ValueField id="red" label="Красный:" value="255" />
            <ValueField id="green" label="Зеленый:" value="128" />
            <ValueField id="blue" label="Синий:" value="0" />
          </div>
        </div>
        <div className="mt-2.5 grid grid-cols-[88px_88px] justify-end gap-x-2 gap-y-[22px]">
          <PushButton>Добавить</PushButton>
          <PushButton>PANTONE...</PushButton>
          <PushButton primary>ОК</PushButton>
          <PushButton>Отмена</PushButton>
        </div>
      </div>
    </div>
  </section>
);

export default function App() {
  return (
    <div className="relative flex h-screen w-full flex-col overflow-hidden bg-[#cccccc] font-['Open_Sans','Noto_Sans_CJK_SC',sans-serif] text-[12px] leading-4">
      <TitleBar />
      <TabBar />
      <Ribbon />
      <div className="h-[29px] shrink-0 border-b-2 border-t border-b-[#c8c8c8] border-t-[#c8c8c8] bg-[#e5efd8]" />
      <div className="flex min-h-0 flex-1">
        <DrawingView />
        <PropertiesPalette />
      </div>
      <TypeDialog />
      <ColorDialog />
    </div>
  );
}
